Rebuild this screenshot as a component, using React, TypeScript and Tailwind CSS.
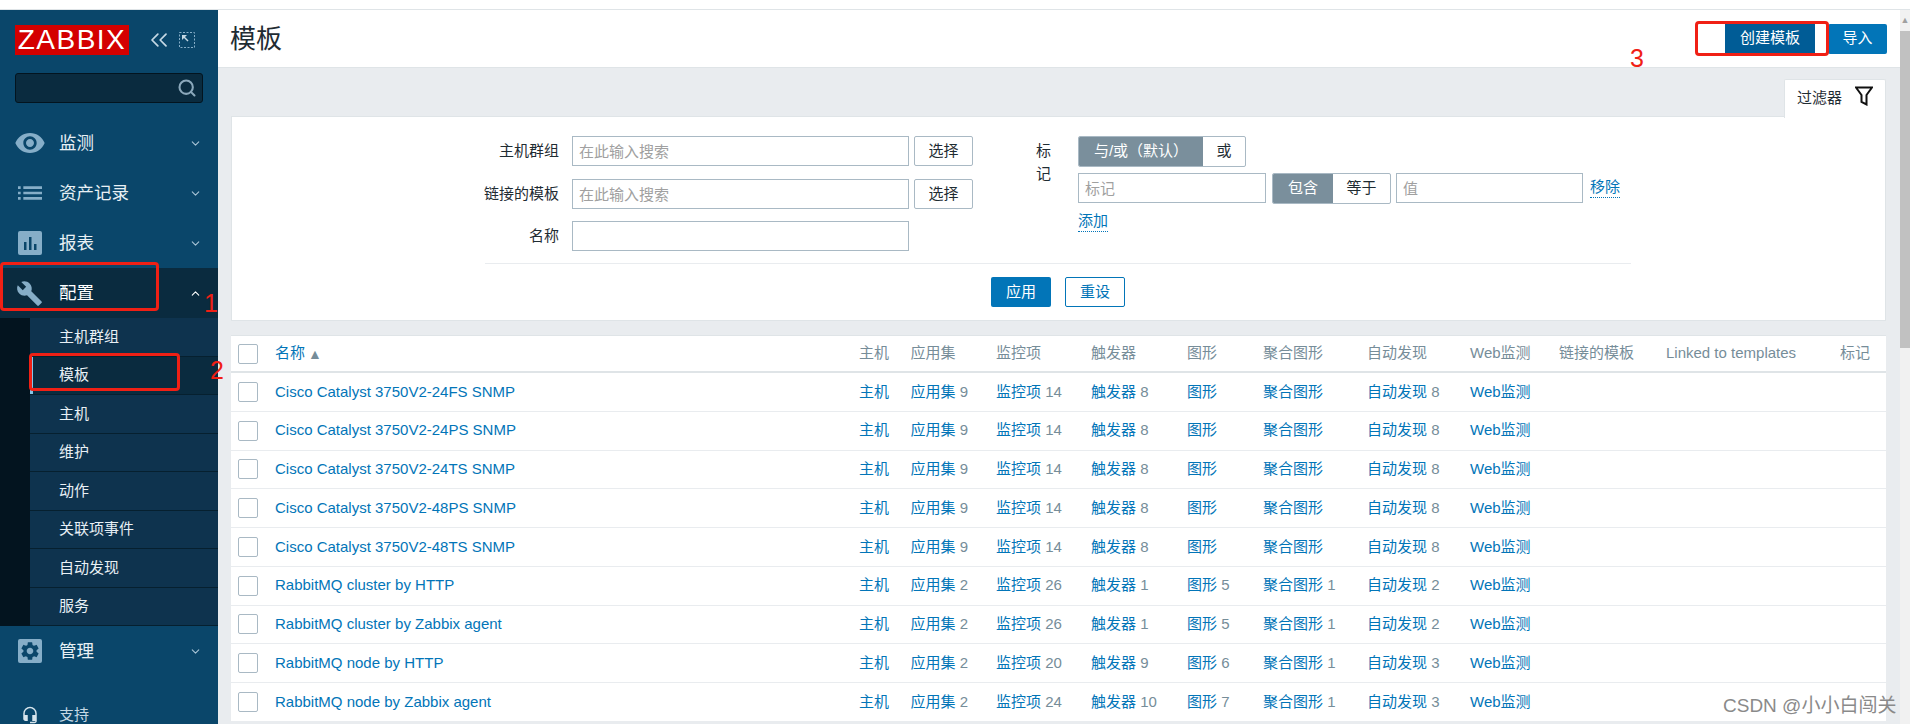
import { ChevronDown, ChevronUp, ChevronsLeft, Search } from 'lucide-react';
import { MdBuild, MdHeadsetMic, MdList, MdSettings, MdVisibility } from 'react-icons/md';

const subMenu = ['主机群组', '模板', '主机', '维护', '动作', '关联项事件', '自动发现', '服务'];

const cols = 'grid grid-cols-[44px_584px_51.5px_85.5px_95px_96px_76px_104px_103px_89px_107px_174px_1fr]';

const headers = ['主机', '应用集', '监控项', '触发器', '图形', '聚合图形', '自动发现', 'Web监测', '链接的模板', 'Linked to templates', '标记'];

const rows = [
  { name: 'Cisco Catalyst 3750V2-24FS SNMP', app: 9, items: 14, trig: 8, graph: '', screen: '', disc: 8 },
  { name: 'Cisco Catalyst 3750V2-24PS SNMP', app: 9, items: 14, trig: 8, graph: '', screen: '', disc: 8 },
  { name: 'Cisco Catalyst 3750V2-24TS SNMP', app: 9, items: 14, trig: 8, graph: '', screen: '', disc: 8 },
  { name: 'Cisco Catalyst 3750V2-48PS SNMP', app: 9, items: 14, trig: 8, graph: '', screen: '', disc: 8 },
  { name: 'Cisco Catalyst 3750V2-48TS SNMP', app: 9, items: 14, trig: 8, graph: '', screen: '', disc: 8 },
  { name: 'RabbitMQ cluster by HTTP', app: 2, items: 26, trig: 1, graph: 5, screen: 1, disc: 2 },
  { name: 'RabbitMQ cluster by Zabbix agent', app: 2, items: 26, trig: 1, graph: 5, screen: 1, disc: 2 },
  { name: 'RabbitMQ node by HTTP', app: 2, items: 20, trig: 9, graph: 6, screen: 1, disc: 3 },
  { name: 'RabbitMQ node by Zabbix agent', app: 2, items: 24, trig: 10, graph: 7, screen: 1, disc: 3 },
];

function BarsIcon() {
  return (
    <svg width="24" height="24" viewBox="0 0 24 24">
      <rect width="24" height="24" rx="2" fill="#86aec8" />
      <rect x="6" y="11" width="2.5" height="8" fill="#0a466a" />
      <rect x="11" y="6" width="2.5" height="13" fill="#0a466a" />
      <rect x="16" y="13" width="2.5" height="6" fill="#0a466a" />
    </svg>
  );
}

function GearIcon() {
  return (
    <div className="flex h-6 w-6 items-center justify-center rounded-[2px] bg-[#86aec8] text-[#0a466a]">
      <MdSettings size={22} />
    </div>
  );
}

function MenuItem({ icon, label, open }: { icon: React.ReactNode; label: string; open?: boolean }) {
  return (
    <div className={`flex h-[50px] items-center ${open ? 'bg-[#0a2b3f]' : ''}`}>
      <div className="flex w-[59px] shrink-0 justify-center text-[#86aec8]">{icon}</div>
      <span className={`flex-1 text-[17.5px] ${open ? 'text-white' : 'text-[#e8f0f5]'}`}>{label}</span>
      {open ? (
        <ChevronUp size={13} strokeWidth={2} className="mr-[16px] text-white" />
      ) : (
        <ChevronDown size={13} strokeWidth={2} className="mr-[16px] text-[#a9c4d6]" />
      )}
    </div>
  );
}

function Sidebar() {
  return (
    <aside className="w-[218px] shrink-0 overflow-hidden bg-[#0a466a] pt-[15px]">
      <div className="flex h-[30px] items-center pl-[15px]">
        <div className="flex h-[30px] w-[114px] items-center justify-center bg-[#d40000] text-[28px] leading-none tracking-[1.5px] text-white">
          ZABBIX
        </div>
        <ChevronsLeft size={28} strokeWidth={1.5} className="ml-[16px] text-[#c5d8e4]" />
        <svg width="16" height="16" viewBox="0 0 16 16" fill="none" className="ml-[6px]">
          <rect x="0.5" y="0.5" width="15" height="15" stroke="#86aec8" strokeDasharray="2 1.5" />
          <path d="M3 3h5L3 8z" fill="#c5d8e4" />
          <path d="M5 5l4 4" stroke="#c5d8e4" strokeWidth="1.5" />
        </svg>
      </div>
      <div className="mx-[15px] mt-[18px] flex h-[30px] items-center justify-end rounded-[3px] border border-[#03141f] bg-[#0a2b3f] pr-[5px]">
        <Search size={20} strokeWidth={2.5} className="text-[#8ba8bb]" />
      </div>
      <nav className="mt-[15px]">
        <MenuItem icon={<MdVisibility size={32} />} label="监测" />
        <MenuItem icon={<MdList size={32} />} label="资产记录" />
        <MenuItem icon={<BarsIcon />} label="报表" />
        <MenuItem icon={<MdBuild size={27} />} label="配置" open />
        <div className="border-l-[30px] border-[#03141f]">
          {subMenu.map((item) => (
            <div
              key={item}
              className={`flex h-[38.5px] items-center border-b border-[#06202f] pl-[29px] text-[15px] text-[#e8f0f5] ${
                item === '模板' ? 'bg-[#0a2b3f] shadow-[inset_3px_0_0_#86c4e8]' : 'bg-[#0e334e]'
              }`}
            >
              {item}
            </div>
          ))}
        </div>
        <MenuItem icon={<GearIcon />} label="管理" />
        <div className="mt-[19px] flex h-[40px] items-center">
          <div className="flex w-[59px] shrink-0 justify-center text-[#d6e4ec]">
            <MdHeadsetMic size={18} />
          </div>
          <span className="text-[15px] text-[#c5d8e4]">支持</span>
        </div>
      </nav>
    </aside>
  );
}

function TextInput({ placeholder, className }: { placeholder?: string; className: string }) {
  return (
    <input
      placeholder={placeholder}
      className={`h-[30px] shrink-0 border border-[#a9b9c4] bg-white px-[6px] text-[15px] outline-none placeholder:text-[#a0a0a0] ${className}`}
    />
  );
}

function SelectButton() {
  return (
    <button className="h-[30px] w-[59px] shrink-0 rounded-[2px] border border-[#a9b9c4] bg-white text-[15px] text-[#1f2c33]">
      选择
    </button>
  );
}

function FilterLabel({ text }: { text: string }) {
  return <label className="w-[153px] shrink-0 pr-[13px] text-right text-[15px] text-[#1f2c33]">{text}</label>;
}

function FilterCard() {
  return (
    <section className="h-[205px] border border-[#dfe4e7] bg-white pt-[19px]">
      <div className="flex h-[109px]">
        <div className="ml-[187px] flex w-[566px] shrink-0 flex-col gap-[13px]">
          <div className="flex items-center">
            <FilterLabel text="主机群组" />
            <TextInput placeholder="在此输入搜索" className="w-[337px]" />
            <div className="ml-[5px]">
              <SelectButton />
            </div>
          </div>
          <div className="flex items-center">
            <FilterLabel text="链接的模板" />
            <TextInput placeholder="在此输入搜索" className="w-[337px]" />
            <div className="ml-[5px]">
              <SelectButton />
            </div>
          </div>
          <div className="-mt-[1px] flex items-center">
            <FilterLabel text="名称" />
            <TextInput className="w-[337px]" />
          </div>
        </div>
        <div className="ml-[51px] flex">
          <div className="mr-[13px] w-[29px] shrink-0 pt-[4px] text-[15px] text-[#1f2c33]">标记</div>
          <div className="flex flex-col">
            <div className="flex h-[31px] w-[168px] overflow-hidden rounded-[2px] border border-[#a9b9c4] text-[15px]">
              <div className="flex w-[124px] items-center justify-center bg-[#7a8f9c] text-white">与/或（默认）</div>
              <div className="flex flex-1 items-center justify-center text-[#1f2c33]">或</div>
            </div>
            <div className="mt-[6px] flex items-start">
              <TextInput placeholder="标记" className="w-[188px]" />
              <div className="ml-[6px] flex h-[31px] w-[119px] overflow-hidden rounded-[2px] border border-[#a9b9c4] text-[15px]">
                <div className="flex w-[60px] items-center justify-center bg-[#7a8f9c] text-white">包含</div>
                <div className="flex flex-1 items-center justify-center text-[#1f2c33]">等于</div>
              </div>
              <TextInput placeholder="值" className="ml-[5px] w-[187px]" />
              <span className="ml-[7px] mt-[4px] border-b border-dotted border-[#0275b8] text-[15px] leading-[20px] text-[#0275b8]">
                移除
              </span>
            </div>
            <span className="mt-[7px] w-fit border-b border-dotted border-[#0275b8] text-[15px] leading-[20px] text-[#0275b8]">
              添加
            </span>
          </div>
        </div>
      </div>
      <div className="ml-[253px] mr-[254px] mt-[18px] flex justify-center border-t border-[#e9ecef] pt-[13px]">
        <div className="flex gap-[14px]">
          <button className="h-[30px] w-[60px] rounded-[2px] bg-[#0275b8] text-[15px] text-white">应用</button>
          <button className="h-[30px] w-[60px] rounded-[2px] border border-[#0275b8] bg-white text-[15px] text-[#0275b8]">
            重设
          </button>
        </div>
      </div>
    </section>
  );
}

function Cell({ label, count }: { label: string; count?: number | string }) {
  return (
    <div className="whitespace-nowrap">
      <span className="text-[#0275b8]">{label}</span>
      {count !== undefined && count !== '' && <span className="text-[#768d99]"> {count}</span>}
    </div>
  );
}

function Checkbox() {
  return <div className="ml-[7px] h-[20px] w-[20px] rounded-[2px] border border-[#a9b9c4] bg-white" />;
}

function TemplateTable() {
  return (
    <section className="mt-[14px] border-t border-[#dfe4e7] bg-white text-[15px]">
      <div className={`${cols} h-[37px] items-center border-b-2 border-[#dfe4e7] text-[#768d99]`}>
        <Checkbox />
        <div className="flex items-center text-[#0275b8]">
          名称
          <span className="ml-[3px] text-[14px] leading-none text-[#768d99]">▲</span>
        </div>
        {headers.map((h) => (
          <div key={h} className="whitespace-nowrap">
            {h}
          </div>
        ))}
      </div>
      {rows.map((r) => (
        <div key={r.name} className={`${cols} h-[38.75px] items-center border-b border-[#e9ecef]`}>
          <Checkbox />
          <div className="text-[#0275b8]">{r.name}</div>
          <Cell label="主机" />
          <Cell label="应用集" count={r.app} />
          <Cell label="监控项" count={r.items} />
          <Cell label="触发器" count={r.trig} />
          <Cell label="图形" count={r.graph} />
          <Cell label="聚合图形" count={r.screen} />
          <Cell label="自动发现" count={r.disc} />
          <Cell label="Web监测" />
        </div>
      ))}
    </section>
  );
}

function Annotations() {
  return (
    <>
      <div className="absolute left-[0px] top-[262px] h-[49px] w-[159px] rounded-[4px] border-[3px] border-[#f02015]" />
      <div className="absolute left-[29px] top-[353px] h-[38px] w-[151px] rounded-[4px] border-[3px] border-[#f02015]" />
      <div className="absolute left-[1695px] top-[21px] h-[35px] w-[134px] rounded-[4px] border-[3px] border-[#f02015]" />
      <span className="absolute left-[204px] top-[288px] text-[25px] leading-[30px] text-[#f02015]">1</span>
      <span className="absolute left-[210px] top-[355px] text-[25px] leading-[30px] text-[#f02015]">2</span>
      <span className="absolute left-[1630px] top-[43px] text-[25px] leading-[30px] text-[#f02015]">3</span>
      <span className="absolute left-[1723px] top-[694px] text-[19px] leading-[24px] text-[#8a8a8a]">CSDN @小小白闯关</span>
    </>
  );
}

export default function App() {
  return (
    <div className="relative flex h-[724px] flex-col overflow-hidden bg-white font-['Liberation_Sans','Noto_Sans_CJK_SC',sans-serif]">
      <div className="h-[10px] shrink-0 border-b border-[#dfe4e7] bg-white" />
      <div className="flex min-h-0 flex-1">
        <Sidebar />
        <main className="min-w-0 flex-1 bg-[#e9ecef]">
          <header className="flex h-[58px] items-center justify-between border-b border-[#dfe4e7] bg-white pl-[12px] pr-[13px]">
            <h1 className="pt-[2px] text-[26px] text-[#1f2c33]">模板</h1>
            <div className="flex">
              <button className="h-[30px] w-[90px] bg-[#005c96] text-[15px] text-white">创建模板</button>
              <button className="ml-[13px] h-[30px] w-[59px] rounded-[2px] bg-[#0275b8] text-[15px] text-white">导入</button>
            </div>
          </header>
          <div className="pl-[13px] pr-[14px] pt-[11px]">
            <div className="relative z-10 -mb-[2px] ml-auto flex h-[39px] w-[102px] items-start rounded-t-[2px] border border-b-0 border-[#dfe4e7] bg-white pl-[12px] pt-[7px] text-[15px] text-[#1f2c33]">
              过滤器
              <svg width="18" height="20" viewBox="0 0 18 20" fill="none" className="ml-[13px] mt-[-1px]">
                <path d="M1 1.5h16l-5.5 7.5v9.5l-5-2.5V9z" stroke="#111" strokeWidth="2" />
              </svg>
            </div>
            <FilterCard />
            <TemplateTable />
          </div>
        </main>
        <div className="w-[10px] shrink-0 bg-[#f1f1f1]">
          <div className="flex h-[21px] items-center justify-center text-[9px] leading-none text-[#a0a0a0]">▲</div>
          <div className="h-[317px] bg-[#c1c1c1]" />
        </div>
      </div>
      <Annotations />
    </div>
  );
}
